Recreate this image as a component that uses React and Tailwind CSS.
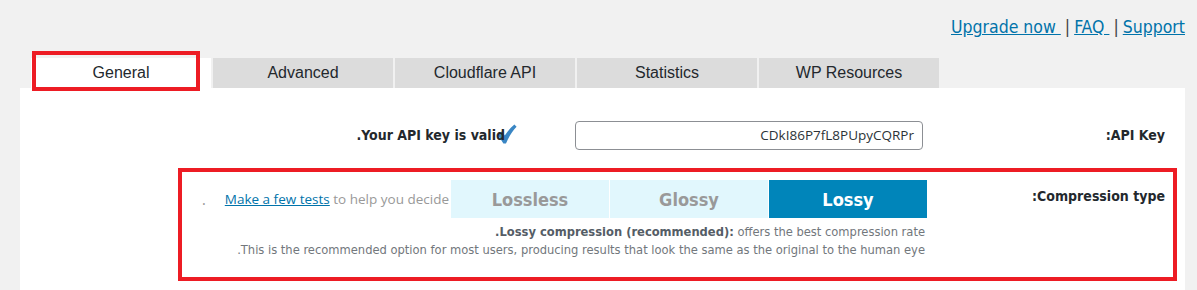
import React from 'react';

const tabs = ['General', 'Advanced', 'Cloudflare API', 'Statistics', 'WP Resources'];

function CheckIcon() {
  return (
    <svg width="20" height="20" viewBox="0 0 20 20" className="shrink-0">
      <path
        d="M0.8 10.8 L4.6 7.6 L7.8 11.6 C10.6 7 13.8 3.4 17.4 0.6 L19.6 2.8 C15.6 6.8 12 12.4 9 19.4 L6.4 19.4 Z"
        fill="#3a86c4"
      />
    </svg>
  );
}

export default function App() {
  const tahoma = { fontFamily: '"DejaVu Sans Condensed", "DejaVu Sans", sans-serif' };

  return (
    <div className="relative w-[1197px] h-[290px] overflow-hidden bg-[#f1f1f1]">
      {/* top links */}
      <div className="flex justify-end h-[58px] pt-[14px] pr-[12px] text-[17.5px] text-[#444]" style={tahoma}>
        <a href="#" className="text-[#0073aa] underline whitespace-pre">{'Upgrade now '}</a>
        <span className="mx-[4px]">|</span>
        <a href="#" className="text-[#0073aa] underline whitespace-pre">{'FAQ '}</a>
        <span className="mx-[4px]">|</span>
        <a href="#" className="text-[#0073aa] underline">Support</a>
      </div>

      {/* tabs */}
      <div className="flex gap-[2px] pl-[31px] h-[30px]" style={{ fontFamily: '"Liberation Sans", Arial, sans-serif' }}>
        {tabs.map((t, i) => (
          <div
            key={t}
            className={`w-[180px] flex items-center justify-center text-[16px] text-[#23282d] ${
              i === 0 ? 'bg-white' : 'bg-[#dcdcdc]'
            }`}
          >
            {t}
          </div>
        ))}
      </div>

      {/* panel */}
      <div dir="rtl" className="ml-[20px] w-[1165px] h-[202px] bg-white">
        {/* API key row */}
        <div className="flex items-center pt-[33px] pr-[20px]">
          <div className="w-[238px] text-[14px] font-bold text-[#23282d]" style={tahoma}>API Key:</div>
          <div
            dir="ltr"
            className="mr-[4px] w-[348px] h-[29px] flex items-center justify-end pr-[8px] border border-[#8c8f94] rounded-[4px] text-[13.5px] text-[#2c3338]"
            style={{ fontFamily: '"Open Sans", sans-serif' }}
          >
            CDkI86P7fL8PUpyCQRPr
          </div>
          <div className="mr-[58px] flex items-center">
            <span className="ml-[-8px] mt-[-4px]" dir="ltr"><CheckIcon /></span>
            <span className="text-[14px] font-bold text-[#23282d]" style={tahoma}>
              Your API key is valid.
            </span>
          </div>
        </div>

        {/* compression type row */}
        <div className="mt-[18px] mr-[8px] ml-[158px] h-[113px] border-[4px] border-[#ed1c24] flex pt-[8px] pr-[8px]">
          <div className="w-[238px] pt-[6px] text-[14px] font-bold text-[#23282d]" style={tahoma}>
            Compression type:
          </div>
          <div className="flex flex-col">
            <div className="flex items-center">
              <div dir="ltr" className="flex gap-[1px] text-[18px] font-bold" style={tahoma}>
                <div className="w-[158px] h-[38px] flex items-center justify-center bg-[#e1f7fd] text-[#999]">Lossless</div>
                <div className="w-[158px] h-[38px] flex items-center justify-center bg-[#e1f7fd] text-[#999]">Glossy</div>
                <div className="w-[158px] h-[38px] flex items-center justify-center bg-[#0085ba] text-white">Lossy</div>
              </div>
              <div
                dir="ltr"
                className="mr-[2px] text-[13.5px] text-[#999]"
                style={{ fontFamily: '"Open Sans", sans-serif' }}
              >
                <a href="#" className="text-[#0073aa] underline">Make a few tests</a> to help you decide
              </div>
              <span className="mr-[19px] text-[14px] text-[#999]">.</span>
            </div>
            <div className="mt-[5px] mr-[2px] text-[12.8px] leading-[18px] text-[#72777c]" style={tahoma}>
              <div>
                <span className="font-bold text-[#555d66]">Lossy compression (recommended):</span> offers the best compression rate<b className="text-[#555d66]">.</b>
              </div>
              <div>This is the recommended option for most users, producing results that look the same as the original to the human eye.</div>
            </div>
          </div>
        </div>
      </div>

      {/* General tab highlight */}
      <div className="absolute left-[32px] top-[51px] w-[168px] h-[40px] border-[4px] border-[#ed1c24]" />
    </div>
  );
}
